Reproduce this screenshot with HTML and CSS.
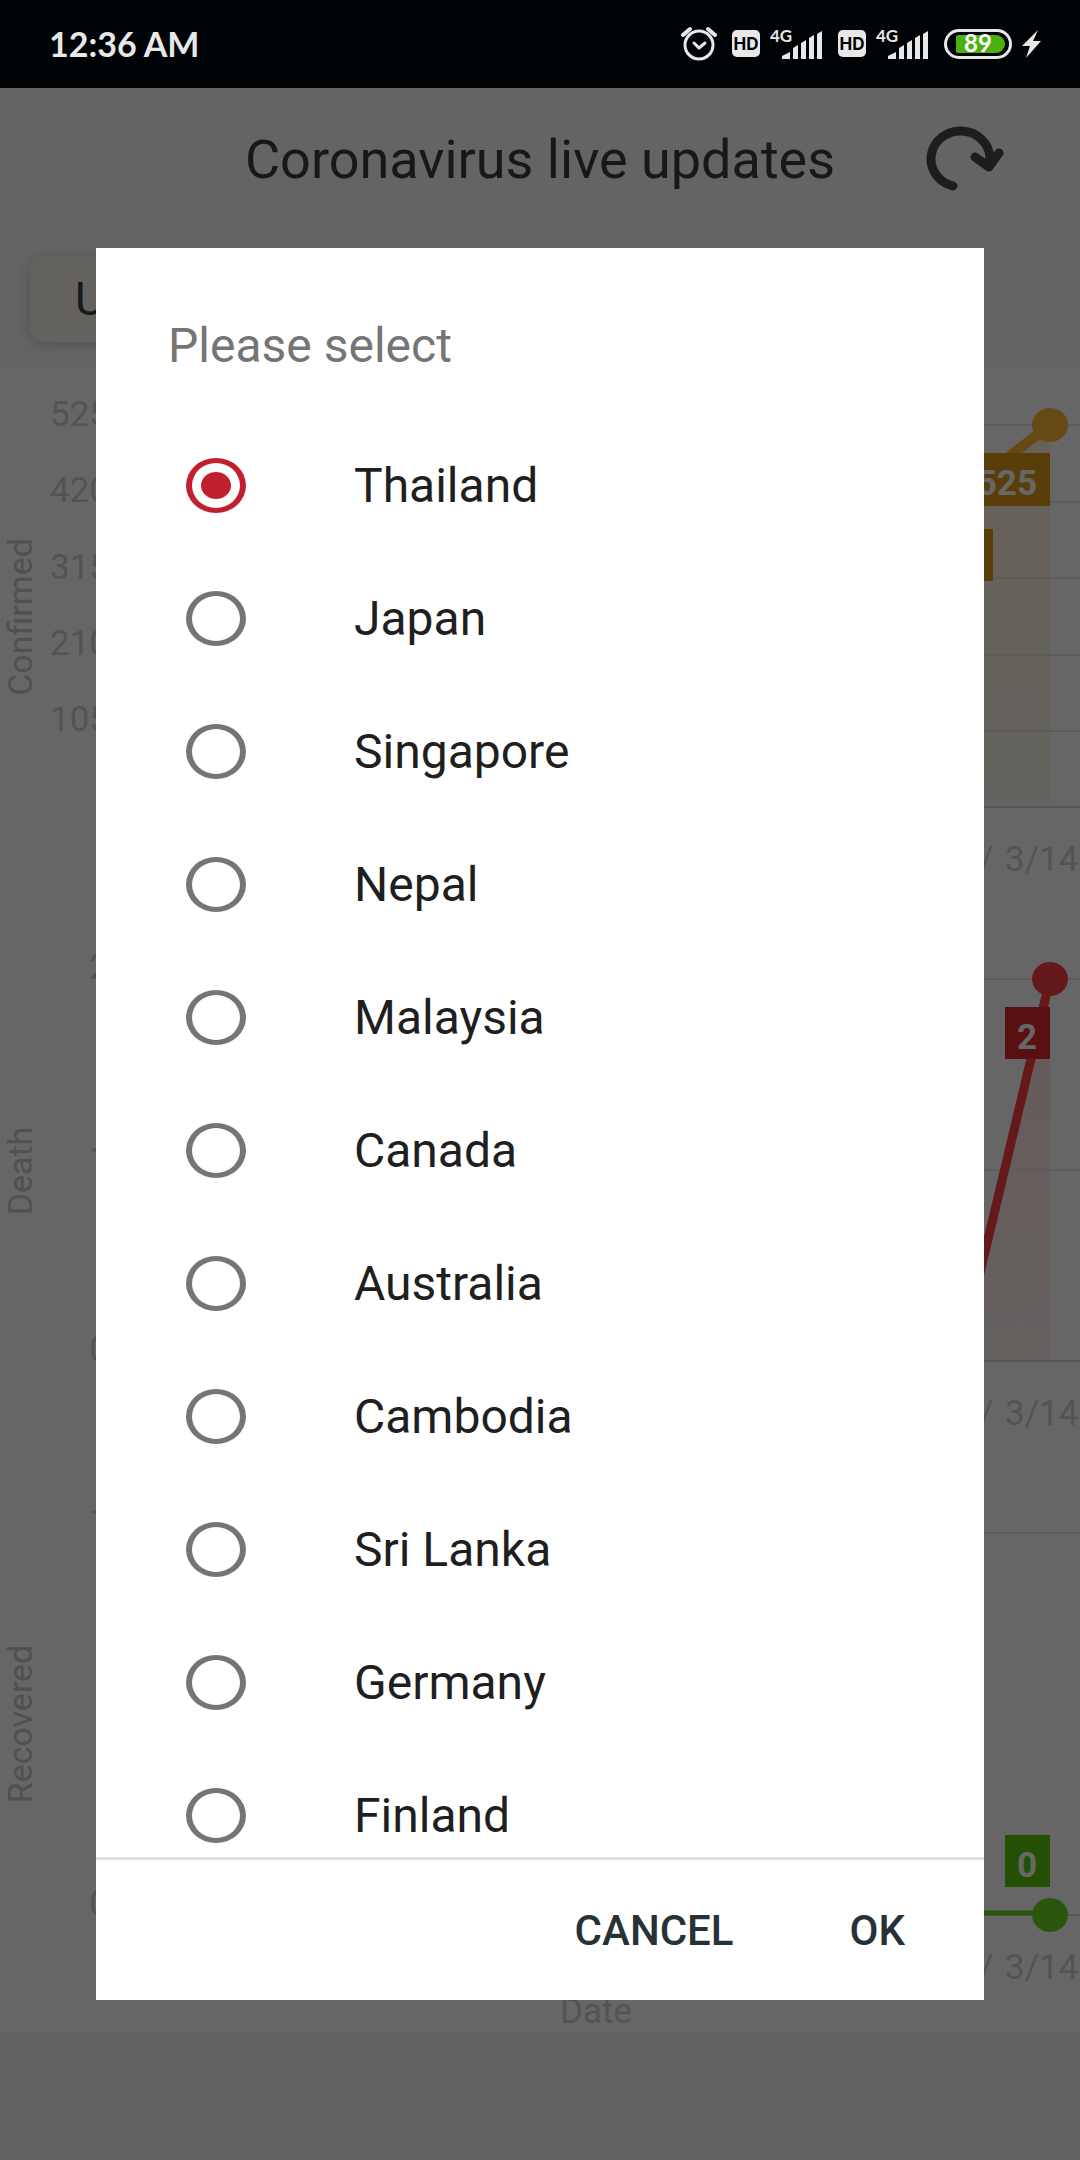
FILE: index.html
```html
<!DOCTYPE html>
<html lang="en">
<head>
<meta charset="utf-8">
<meta name="viewport" content="width=device-width, initial-scale=1">
<title>Coronavirus live updates</title>
<link rel="stylesheet" href="styles.css">
</head>
<body>
<div class="status">
  <span class="clock">12:36 AM</span>
  <svg class="alarm" width="36" height="36" viewBox="0 0 36 36" fill="none" stroke="#e8e8e8" stroke-width="3" stroke-linecap="round" stroke-linejoin="round"><circle cx="18" cy="19" r="14"/><path d="M13 17l5 5 6-5"/><path d="M2 9l7-6M34 9l-7-6" stroke-width="4"/></svg>
  <svg class="hd" width="28" height="28" viewBox="0 0 28 28"><rect width="28" height="27" rx="5" fill="#e8e8e8"/><text x="14" y="20" text-anchor="middle" class="hd-text">HD</text></svg>
  <svg class="signal" width="52" height="36" viewBox="0 -4 52 36" fill="#e8e8e8"><text x="0" y="12" class="net">4G</text><path d="M12 29v-3l8-4v7zM23 29V18l5-3v14zM31 29V13l5-3v19zM39 29V8l5-3v24zM47 29V4l5-3v28z"/></svg>
  <svg class="hd" width="28" height="28" viewBox="0 0 28 28"><rect width="28" height="27" rx="5" fill="#e8e8e8"/><text x="14" y="20" text-anchor="middle" class="hd-text">HD</text></svg>
  <svg class="signal" width="52" height="36" viewBox="0 -4 52 36" fill="#e8e8e8"><text x="0" y="12" class="net">4G</text><path d="M12 29v-3l8-4v7zM23 29V18l5-3v14zM31 29V13l5-3v19zM39 29V8l5-3v24zM47 29V4l5-3v28z"/></svg>
  <svg class="battery" width="68" height="30" viewBox="0 0 68 30"><rect x="1.5" y="1.5" width="65" height="27" rx="13.5" fill="none" stroke="#e8e8e8" stroke-width="3"/><path d="M14 6H52a9 9 0 0 1 0 18H14a2 2 0 0 1-2-2V8a2 2 0 0 1 2-2z" fill="#4caf12"/><text x="34" y="23" text-anchor="middle" class="charge">89</text></svg>
  <svg class="bolt" width="20" height="28" viewBox="0 0 20 28" fill="#e8e8e8"><path d="M16 0L0 16h8L4 28 19 11h-8z"/></svg>
</div>

<main class="page">
  <header class="bar">
    <h1>Coronavirus live updates</h1>
    <button class="refresh" type="button" aria-label="Refresh">
      <svg width="80" height="68" viewBox="910 124 80 68" fill="none" stroke="#4a4a4a" stroke-width="9" stroke-linecap="round" stroke-linejoin="round"><path d="M939 184A29.5 28 0 1 1 976 156L975 164M961 155l14 10 10-14"/></svg>
    </button>
  </header>
  <div class="filters"><button class="filter" type="button">U</button></div>

  <div class="charts">
    <svg class="chart" viewBox="0 370 1080 530">
      <defs><linearGradient id="sun" x1="0" y1="0" x2="0" y2="1"><stop offset="0" stop-color="#fff0da"/><stop offset="1" stop-color="#fbf8ee"/></linearGradient></defs>
      <path fill="url(#sun)" d="M959 495L1050 425V807H959z"/>
      <path class="grid" d="M120 425H1080M120 502H1080M120 578H1080M120 655H1080M120 731H1080"/>
      <path class="axis" d="M120 807H1080"/>
      <path d="M959 495L1050 425" stroke="#ffb833" stroke-width="10"/>
      <ellipse cx="1050" cy="425" rx="18" ry="17" fill="#ffb833"/>
      <path fill="#e19c19" d="M967 453h83v53h-83zM925 529h68v52h-68z"/>
      <text class="value" x="1037" y="495" text-anchor="end">525</text>
      <g class="tick" text-anchor="end"><text x="109" y="426">525</text><text x="109" y="502">420</text><text x="109" y="579">315</text><text x="109" y="655">210</text><text x="109" y="731">105</text></g>
      <g class="tick"><text x="979" y="871">/</text><text x="1005" y="871">3/14</text></g>
      <text class="name" text-anchor="middle" transform="translate(32 617) rotate(-90)">Confirmed</text>
    </svg>
    <svg class="chart" viewBox="0 900 1080 560">
      <defs><linearGradient id="rose" x1="0" y1="0" x2="0" y2="1"><stop offset="0" stop-color="#ffe0de"/><stop offset="1" stop-color="#fbf3ef"/></linearGradient></defs>
      <path fill="url(#rose)" d="M959 1361L1050 979V1361z"/>
      <path class="grid" d="M120 979H1080M120 1170H1080"/>
      <path class="axis" d="M120 1361H1080"/>
      <path d="M959 1361L1050 979" stroke="#fa4144" stroke-width="9"/>
      <ellipse cx="1050" cy="979" rx="18" ry="17" fill="#fa4144"/>
      <path fill="#e12628" d="M1005 1007h45v52h-45z"/>
      <text class="value" x="1037" y="1049" text-anchor="end">2</text>
      <g class="tick" text-anchor="end"><text x="109" y="979">2</text><text x="109" y="1171">1</text><text x="109" y="1361">0</text></g>
      <g class="tick"><text x="979" y="1425">/</text><text x="1005" y="1425">3/14</text></g>
      <text class="name" text-anchor="middle" transform="translate(32 1171) rotate(-90)">Death</text>
    </svg>
    <svg class="chart" viewBox="0 1460 1080 571">
      <path class="grid" d="M120 1533H1080"/>
      <path class="axis" d="M120 1915H1080"/>
      <path d="M120 1913H1050" stroke="#69d921" stroke-width="5"/>
      <ellipse cx="1050" cy="1915" rx="18" ry="17" fill="#69d921"/>
      <path fill="#5ac80f" d="M1005 1835h45v52h-45z"/>
      <text class="value" x="1037" y="1877" text-anchor="end">0</text>
      <g class="tick" text-anchor="end"><text x="109" y="1533">1</text><text x="109" y="1915">0</text></g>
      <g class="tick"><text x="979" y="1979">/</text><text x="1005" y="1979">3/14</text><text x="560" y="2023">Date</text></g>
      <text class="name" text-anchor="middle" transform="translate(32 1724) rotate(-90)">Recovered</text>
    </svg>
  </div>
</main>

<div class="scrim">
  <form class="dialog" role="dialog" aria-labelledby="dialog-title">
    <h2 id="dialog-title">Please select</h2>
    <div class="options">
      <label class="option"><input type="radio" name="country" checked>Thailand</label>
      <label class="option"><input type="radio" name="country">Japan</label>
      <label class="option"><input type="radio" name="country">Singapore</label>
      <label class="option"><input type="radio" name="country">Nepal</label>
      <label class="option"><input type="radio" name="country">Malaysia</label>
      <label class="option"><input type="radio" name="country">Canada</label>
      <label class="option"><input type="radio" name="country">Australia</label>
      <label class="option"><input type="radio" name="country">Cambodia</label>
      <label class="option"><input type="radio" name="country">Sri Lanka</label>
      <label class="option"><input type="radio" name="country">Germany</label>
      <label class="option"><input type="radio" name="country">Finland</label>
    </div>
    <div class="actions">
      <button type="button">CANCEL</button>
      <button type="button">OK</button>
    </div>
  </form>
</div>
</body>
</html>
```
FILE: styles.css
```css
* { box-sizing: border-box; }

body {
  margin: 0;
  min-height: 100vh;
  background: #f8f8f8;
  font-family: Roboto, "Noto Sans", sans-serif;
  color: #3c3c3c;
}

button {
  border: 0;
  padding: 0;
  background: none;
  font: inherit;
  color: inherit;
}

svg { display: block; flex: none; }

/* System status bar stays above the scrim */
.status {
  position: relative;
  z-index: 2;
  display: flex;
  align-items: center;
  gap: 10px;
  height: 88px;
  padding: 0 38px 0 49px;
  background: #000306;
  color: #e8e8e8;
}
.clock {
  margin-right: auto;
  font: 700 34px/40px Lato, sans-serif;
}
.hd { margin-left: 5px; }
.signal { margin-right: 6px; }
.signal + .hd { margin-left: 0; }
.hd-text { font: 700 17px Inter, sans-serif; fill: #000306; }
.net { font: 700 17px Lato, sans-serif; }
.charge { font: 700 24px Lato, sans-serif; fill: #fff; }

.bar {
  display: grid;
  grid-template-columns: 1fr auto 1fr;
  align-items: center;
  height: 144px;
  background: #fafafa;
}
.bar h1 {
  grid-column: 2;
  margin: 0;
  font-size: 54px;
  font-weight: 400;
  line-height: 60px;
}
.refresh {
  justify-self: end;
  margin-right: 76px;
}

.filters {
  padding: 23px 30px 28px;
  background: #fafafa;
}
.filter {
  width: 320px;
  height: 87px;
  padding: 0 45px;
  border-radius: 14px;
  background: #f8f4ec;
  box-shadow: 0 2px 14px rgba(0, 0, 0, 0.2);
  font-size: 46px;
  text-align: left;
}

.charts { background: #fff; }
.chart { width: 100%; height: auto; }
.grid { stroke: #e6e6e6; stroke-width: 2; }
.axis { stroke: #d4d4d4; stroke-width: 2; }
.tick { font-size: 35px; fill: #d0d0d0; }
.name { font-size: 34px; fill: #c8c8c8; }
.value { font-size: 35px; font-weight: 700; fill: #fff; }

.scrim {
  position: fixed;
  inset: 0;
  z-index: 1;
  display: flex;
  padding: 248px 96px 160px;
  background: rgba(0, 0, 0, 0.6);
}
.dialog {
  display: flex;
  flex: 1;
  flex-direction: column;
  min-height: 0;
  background: #fff;
}
.dialog h2 {
  margin: 0;
  padding: 70px 72px 45px;
  font-size: 48px;
  font-weight: 400;
  line-height: 56px;
  color: #757575;
}
.options {
  flex: 1;
  min-height: 0;
  overflow: hidden;
}
.option {
  display: flex;
  align-items: center;
  gap: 108px;
  height: 133px;
  padding: 0 90px;
  font-size: 48px;
  color: #1f1f1f;
}
.option input {
  appearance: none;
  display: grid;
  place-items: center;
  width: 60px;
  height: 55px;
  margin: 0;
  border: 6px solid #757575;
  border-top-width: 5px;
  border-bottom-width: 5px;
  border-radius: 50%;
}
.option input:checked { border-color: #c1202e; }
.option input:checked::before {
  content: "";
  width: 30px;
  height: 27px;
  border-radius: 50%;
  background: #c1202e;
}
.actions {
  display: flex;
  justify-content: flex-end;
  align-items: center;
  gap: 116px;
  height: 143px;
  padding: 0 79px;
  border-top: 3px solid #e0e0e0;
  font-size: 42px;
  font-weight: 500;
  color: #263238;
}
```
